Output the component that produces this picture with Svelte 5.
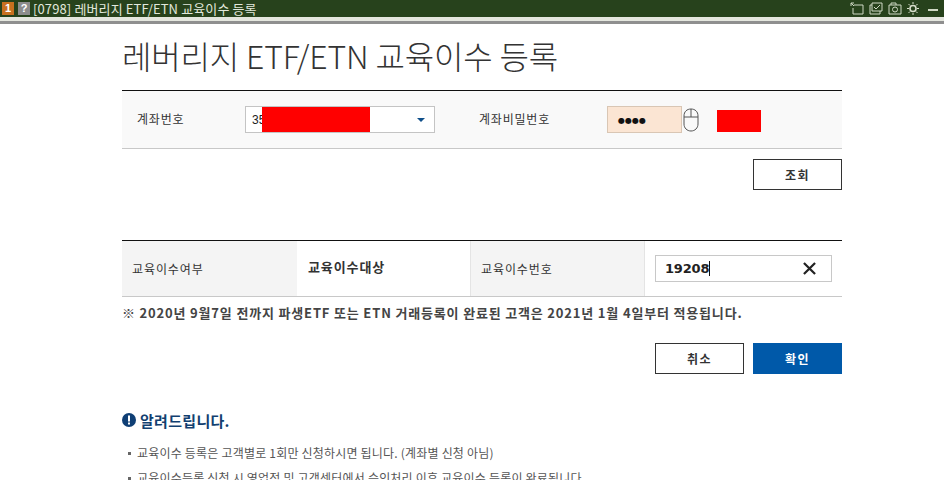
<script>
  const notices = [
    '교육이수 등록은 고객별로 1회만 신청하시면 됩니다. (계좌별 신청 아님)',
    '교육이수등록 신청 시 영업점 및 고객센터에서 승인처리 이후 교육이수 등록이 완료됩니다.'
  ];
</script>

<div class="page">
  <header class="titlebar">
    <span class="badge one">1</span>
    <span class="badge help">?</span>
    <span class="wintitle">[0798] 레버리지 ETF/ETN 교육이수 등록</span>
    <div class="tools">
      <svg viewBox="0 0 14 13" width="14" height="13"><path d="M1 1l3 3M1 4V1h3M4 3h9v9H3V6" fill="none" stroke="#cfd8c4"/></svg>
      <svg viewBox="0 0 14 13" width="14" height="13"><path d="M3 3H1v9h10V9M3 1h10v8H3zM5 5l2 2 4-4" fill="none" stroke="#cfd8c4"/></svg>
      <svg viewBox="0 0 14 13" width="14" height="13"><path d="M1 3h12v9H1zM3 3V1h5v2" fill="none" stroke="#cfd8c4"/><circle cx="7" cy="7.500" r="2.500" fill="none" stroke="#cfd8c4"/></svg>
      <svg class="gear" viewBox="0 0 14 13" width="14" height="13"><circle cx="7" cy="6.500" r="3" fill="none" stroke="#d8dfcc" stroke-width="1.600"/><path d="M7 0v2M7 11v2M1 6.500h2M11 6.500h2M2.500 2l1.500 1.500M10 9.500l1.500 1.500M11.500 2L10 3.500M4 9.500L2.500 11" stroke="#d8dfcc"/></svg>
      <span class="minimize"></span>
    </div>
  </header>
  <div class="strip"></div>

  <main class="content">
    <h1>레버리지 ETF/ETN 교육이수 등록</h1>

    <section class="account">
      <span class="label lab1">계좌번호</span>
      <div class="select">
        <span class="acct">35</span>
        <span class="redact wide"></span>
        <span class="arrow"></span>
      </div>
      <span class="label lab2">계좌비밀번호</span>
      <div class="pw">●●●●</div>
      <svg class="mouse" viewBox="0 0 16 24" width="16" height="24">
        <path d="M8 1C4 1 1 3.500 1 8v8c0 4 3 7 7 7s7-3 7-7V8c0-4.500-3-7-7-7zM1 9h14M8 1v8" fill="none" stroke="#555"/>
      </svg>
      <span class="redact small"></span>
    </section>

    <div class="row-right first">
      <button class="btn outline">조회</button>
    </div>

    <section class="edu">
      <div class="th">교육이수여부</div>
      <div class="td target">교육이수대상</div>
      <div class="th">교육이수번호</div>
      <div class="td">
        <div class="numinput">
          <span class="num">19208<i class="caret"></i></span>
          <svg viewBox="0 0 14 14" width="13" height="13"><path d="M1 1l12 12M13 1L1 13" stroke="#222" stroke-width="2.400" fill="none"/></svg>
        </div>
      </div>
    </section>

    <p class="note">※ 2020년 9월7일 전까지 파생ETF 또는 ETN 거래등록이 완료된 고객은 2021년 1월 4일부터 적용됩니다.</p>

    <div class="row-right actions">
      <button class="btn outline">취소</button>
      <button class="btn primary">확인</button>
    </div>

    <h2>
      <svg viewBox="0 0 14 14" width="14" height="14"><circle cx="7" cy="7" r="7" fill="#0f3f75"/><rect x="6" y="2.500" width="2" height="6" fill="#fff"/><rect x="6" y="9.500" width="2" height="2" fill="#fff"/></svg>
      알려드립니다.
    </h2>
    <ul>
      {#each notices as n}
        <li>{n}</li>
      {/each}
    </ul>
  </main>
</div>

<style>
  :global(body) {
    margin: 0;
    background: #fff;
    overflow: hidden;
  }
  .page {
    width: 944px;
    height: 480px;
    overflow: hidden;
    font-family: "Noto Sans CJK KR", "Liberation Sans", sans-serif;
    color: #333;
    background: #fff;
  }
  .titlebar {
    height: 17px;
    background: #27421c;
    display: flex;
    align-items: center;
    padding-left: 2px;
    gap: 3px;
  }
  .badge {
    width: 12px;
    height: 13px;
    font: bold 11px/13px "Liberation Sans", sans-serif;
    text-align: center;
    color: #fff;
  }
  .one { background: #c8701f; }
  .help { background: #8c8c8c; margin-left: 1px; }
  .wintitle {
    font: 13px/17px "Noto Sans CJK KR", sans-serif;
    color: #e2e8dc;
    letter-spacing: 0.12px;
    white-space: nowrap;
  }
  .tools {
    margin-left: auto;
    display: flex;
    align-items: center;
    gap: 5px;
  }
  .tools svg { display: block; }
  .tools .gear { margin-left: -1px; }
  .minimize {
    width: 10px;
    height: 2px;
    margin: 3px 6px 0 3px;
    background: #cfd8c4;
  }
  .strip {
    height: 4px;
    background: #e4e6de;
    border-bottom: 3px solid #8f8f8f;
  }
  .content {
    width: 720px;
    margin-left: 122px;
  }
  h1 {
    margin: 9px 0 0;
    height: 44px;
    font-size: 32px;
    line-height: 44px;
    font-weight: 300;
    color: #333;
    letter-spacing: -0.15px;
    white-space: nowrap;
  }
  .account {
    position: relative;
    margin-top: 13px;
    display: flex;
    align-items: center;
    background: #f9f9f9;
    border-top: 1px solid #111;
    border-bottom: 1px solid #c8c8c8;
    box-sizing: border-box;
    height: 59px;
  }
  .label {
    color: #333;
    font-size: 12px;
    letter-spacing: 0.8px;
    margin-top: -3px;
  }
  .lab1 { margin-left: 15px; width: 108px; }
  .select {
    position: relative;
    width: 190px;
    height: 27px;
    box-sizing: border-box;
    border: 1px solid #c4c4c4;
    background: #fff;
    display: flex;
    align-items: center;
    padding-left: 6px;
    font: 12px "Liberation Sans", sans-serif;
  }
  .acct { color: #222; }
  .arrow {
    position: absolute;
    right: 9px;
    top: 11px;
    border-left: 4px solid transparent;
    border-right: 4px solid transparent;
    border-top: 4px solid #0f4f8a;
  }
  .redact {
    position: absolute;
    background: #f00;
  }
  .wide { left: 16px; top: 0; width: 108px; height: 25px; }
  .small { left: 595px; top: 19px; width: 44px; height: 22px; }
  .lab2 { margin-left: 44px; width: 128px; }
  .pw {
    width: 75px;
    height: 27px;
    box-sizing: border-box;
    background: #fbe5d3;
    border: 1px solid #d9c6b4;
    padding-left: 10px;
    font: 8px/27px "DejaVu Sans", sans-serif;
    color: #111;
  }
  .mouse { margin-left: 1px; }
  .row-right {
    display: flex;
    justify-content: flex-end;
    gap: 9px;
  }
  .first { margin-top: 10px; }
  .btn {
    width: 89px;
    height: 31px;
    box-sizing: border-box;
    font: bold 12px "Noto Sans CJK KR", sans-serif;
    letter-spacing: 1.500px;
    padding: 0;
    cursor: pointer;
  }
  .outline {
    background: #fff;
    border: 1px solid #333;
    color: #333;
  }
  .primary {
    background: #0059a9;
    border: 1px solid #0059a9;
    color: #fff;
  }
  .edu {
    margin-top: 50px;
    display: grid;
    grid-template-columns: 175px 173px 175px 197px;
    height: 57px;
    box-sizing: border-box;
    border-top: 1px solid #111;
    border-bottom: 1px solid #c8c8c8;
    font-size: 12px;
    letter-spacing: 0.9px;
  }
  .th {
    background: #f4f4f4;
    display: flex;
    align-items: center;
    padding-left: 10px;
  }
  .th:nth-child(3) { border-left: 1px solid #e4e4e4; border-right: 1px solid #e4e4e4; }
  .td {
    display: flex;
    align-items: center;
    padding-left: 10px;
  }
  .target {
    font-size: 13px;
    font-weight: 700;
    padding-left: 11px;
    padding-bottom: 5px;
  }
  .numinput {
    width: 177px;
    height: 27px;
    box-sizing: border-box;
    border: 1px solid #c8c8c8;
    display: flex;
    align-items: center;
    justify-content: space-between;
    padding: 0 15px 0 9px;
    margin-top: -1px;
    letter-spacing: 0;
  }
  .num {
    font: bold 13px "DejaVu Sans", sans-serif;
    color: #222;
    display: flex;
    align-items: center;
    letter-spacing: -0.2px;
  }
  .caret {
    display: inline-block;
    width: 1px;
    height: 15px;
    background: #111;
  }
  .note {
    margin: 7px 0 0;
    height: 18px;
    font-size: 13px;
    line-height: 18px;
    font-weight: 700;
    color: #444;
    white-space: nowrap;
    letter-spacing: 0.82px;
  }
  .actions { margin-top: 21px; }
  h2 {
    margin: 36px 0 0;
    height: 20px;
    display: flex;
    align-items: center;
    gap: 4px;
    font-size: 15px;
    letter-spacing: 0.3px;
    font-weight: 700;
    color: #123f70;
  }
  ul {
    list-style: none;
    margin: 14px 0 0;
    padding: 0 0 0 5px;
  }
  li {
    font-size: 12px;
    line-height: 17px;
    height: 17px;
    margin-bottom: 8px;
    color: #555;
    white-space: nowrap;
    padding-left: 10px;
    position: relative;
    letter-spacing: 0.2px;
  }
  li::before {
    content: "";
    position: absolute;
    left: 1px;
    top: 8px;
    width: 3px;
    height: 3px;
    background: #666;
  }
</style>
